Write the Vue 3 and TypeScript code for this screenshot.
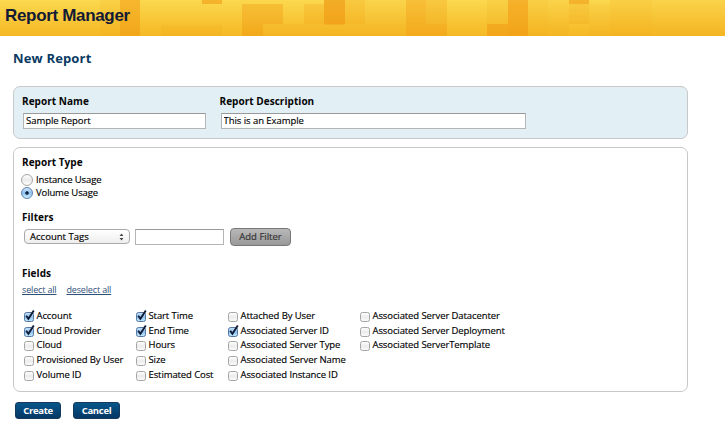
<script setup lang="ts">
import { ref } from 'vue'

interface Field { label: string; on: boolean }
interface Tile { x: number; y: number; w: number; h: number; o: number }

const name = ref('Sample Report')
const description = ref('This is an Example')
const filterText = ref('')
const reportType = ref('Volume Usage')
const types = ['Instance Usage', 'Volume Usage']

const f = (label: string, on = false): Field => ({ label, on })
const columns = ref<Field[][]>([
  [f('Account', true), f('Cloud Provider', true), f('Cloud'), f('Provisioned By User'), f('Volume ID')],
  [f('Start Time', true), f('End Time', true), f('Hours'), f('Size'), f('Estimated Cost')],
  [f('Attached By User'), f('Associated Server ID', true), f('Associated Server Type'), f('Associated Server Name'), f('Associated Instance ID')],
  [f('Associated Server Datacenter'), f('Associated Server Deployment'), f('Associated ServerTemplate')],
])

function setAll(on: boolean) {
  columns.value.forEach(col => col.forEach(item => { item.on = on }))
}

const t = (x: number, y: number, w: number, h: number, o: number): Tile => ({ x, y, w, h, o })
const tiles: Tile[] = [
  t(100, 0, 20, 36, 0.1), t(120, 0, 20, 36, 0.45), t(161, 25, 61, 11, 0.1),
  t(202, 0, 20, 4, 0.5), t(242, 4, 41, 20, 0.32), t(242, 24, 21, 12, 0.36),
  t(263, 24, 143, 12, 0.08), t(304, 4, 20, 20, 0.2), t(324, 0, 21, 24.5, 0.6),
  t(345, 0, 20, 24, 0.2), t(365, 0, 41, 24, 0.05), t(406, 0, 20, 24, 0.34),
  t(426, 0, 21, 24, 0.22), t(406, 24, 41, 12, 0.34), t(487, 0, 21, 24, 0.1),
  t(487, 24, 21, 12, 0.46), t(508, 0, 20, 36, 0.52), t(528, 0, 20, 36, 0.12), t(548, 0, 21, 36, 0.06),
  t(569, 0, 20, 4, 0.5), t(569, 4, 20, 20, 0.16), t(589, 4, 21, 32, 0.05),
  t(610, 0, 42, 36, 0.12), t(652, 0, 73, 36, 0.06),
]
</script>

<template>
  <div class="page">
    <header class="banner">
      <svg class="mosaic" viewBox="0 0 725 36" preserveAspectRatio="none" aria-hidden="true">
        <rect v-for="(r, i) in tiles" :key="i" :x="r.x" :y="r.y" :width="r.w" :height="r.h" fill="#ef900c" :fill-opacity="r.o" />
      </svg>
      <h1>Report Manager</h1>
    </header>

    <h2>New Report</h2>

    <section class="panel blue">
      <div class="group name">
        <h3>Report Name</h3>
        <input v-model="name" class="text" type="text" />
      </div>
      <div class="group desc">
        <h3>Report Description</h3>
        <input v-model="description" class="text" type="text" />
      </div>
    </section>

    <section class="panel main">
      <h3>Report Type</h3>
      <div class="radios">
        <label v-for="type in types" :key="type">
          <input v-model="reportType" type="radio" name="type" :value="type" />
          <span>{{ type }}</span>
        </label>
      </div>

      <h3 class="filters-title">Filters</h3>
      <div class="filters">
        <button class="select" type="button">
          <span>Account Tags</span>
          <svg width="5" height="8" viewBox="0 0 5 8"><path d="M0.6 3L2.5 0.6L4.4 3ZM0.6 5L2.5 7.4L4.4 5Z" fill="#444" /></svg>
        </button>
        <input v-model="filterText" class="text" type="text" />
        <button class="add" type="button">Add Filter</button>
      </div>

      <h3 class="fields-title">Fields</h3>
      <div class="links">
        <a href="#" @click.prevent="setAll(true)">select all</a>
        <a href="#" @click.prevent="setAll(false)">deselect all</a>
      </div>

      <div class="fields">
        <div v-for="(col, c) in columns" :key="c" class="col">
          <label v-for="item in col" :key="item.label">
            <input v-model="item.on" type="checkbox" />
            <svg class="box" width="12" height="13" viewBox="0 0 12 13">
              <defs>
                <linearGradient :id="'off' + c" x2="0" y2="1"><stop stop-color="#fff" /><stop offset=".5" stop-color="#ececec" /><stop offset="1" stop-color="#fbfbfb" /></linearGradient>
                <linearGradient :id="'on' + c" x2="0" y2="1"><stop stop-color="#c9e2f8" /><stop offset=".5" stop-color="#8fc2ef" /><stop offset="1" stop-color="#c4ecff" /></linearGradient>
              </defs>
              <rect x="1.5" y="3.5" width="9" height="9" rx="2" :fill="`url(#${item.on ? 'on' : 'off'}${c})`" :stroke="item.on ? '#57779f' : '#a5a5a5'" />
              <path v-if="item.on" d="M3.2 6.8L5.4 9.8L10.8 1.6" fill="none" stroke="#101b35" stroke-width="1.9" />
            </svg>
            <span>{{ item.label }}</span>
          </label>
        </div>
      </div>
    </section>

    <div class="actions">
      <button type="button">Create</button>
      <button type="button">Cancel</button>
    </div>
  </div>
</template>

<style>
body { background: #fff; }
</style>

<style scoped>
* { box-sizing: border-box; }
.page { width: 725px; height: 431px; overflow: hidden; background: #fff; color: #000; font: 9.5px/15px "Open Sans", "Noto Sans", sans-serif; letter-spacing: -.1px; -webkit-text-stroke: .15px currentColor; }
h1, h2, h3 { margin: 0; -webkit-text-stroke: 0; }
input, button { margin: 0; font: inherit; color: inherit; letter-spacing: inherit; }
.banner { position: relative; height: 36px; background: linear-gradient(#fbd84e, #f5b824); }
.mosaic { position: absolute; inset: 0; width: 725px; height: 36px; }
h1 { position: relative; padding: 6px 0 0 5px; font: bold 17px/20px "Liberation Sans", Arial, sans-serif; color: #121a35; letter-spacing: -.33px; }
h2 { height: 50px; padding: 12px 0 0 13px; font-size: 13px; line-height: 20px; font-weight: 700; color: #0a3a63; letter-spacing: .16px; }
h3 { font-size: 10px; line-height: 14px; font-weight: 700; color: #050505; letter-spacing: .04px; }
.panel { width: 675px; margin-left: 13px; border: 1px solid #c8c8c8; border-radius: 7px; }
.blue { display: flex; height: 53px; padding: 7px 8px 0; background: #e2eff5; }
.group.name { width: 197.5px; }
.group.desc { width: 306px; }
.text { display: block; height: 16px; padding: 0 2px 1px; border: 1px solid #b5b5b5; border-top-color: #999; border-radius: 0; background: #fff; outline: 0; letter-spacing: -.05px; }
.group .text { margin: 5px 0 0 1px; }
.name .text { width: 183px; }
.desc .text { width: 305px; }
.main { height: 245px; margin-top: 8px; padding: 7px 8px 0; }
.radios { display: flex; flex-direction: column; margin-top: 4px; }
.radios label { display: flex; align-items: center; height: 13px; gap: 3px; letter-spacing: -.12px; }
.radios input { appearance: none; flex: none; width: 12px; height: 12px; margin-left: -1px; border: 1px solid #a5a5a5; border-radius: 50%; background: linear-gradient(#fff, #eaeaea 50%, #fff); }
.radios input:checked { border-color: #6080aa; background: radial-gradient(circle, #10233f 0 1.3px, transparent 2.2px), linear-gradient(#cce5fc, #8fc2ef 50%, #c8efff); }
.filters-title { margin-top: 11px; }
.filters { display: flex; margin-top: 3px; align-items: center; height: 19px; padding-left: 2px; }
.select { display: flex; justify-content: space-between; align-items: center; width: 106px; height: 15px; padding: 0 5px 0 5px; border: 1px solid #aaa; border-radius: 4px; background: linear-gradient(#fff, #eee); letter-spacing: .02px; }
.filters .text { width: 89px; margin-left: 5px; }
.add { width: 61px; height: 18px; margin-left: 6px; padding: 0; border: 1px solid #777; border-radius: 4px; background: linear-gradient(#b8b8b8, #999); color: #333; line-height: 14px; letter-spacing: 0; }
.fields-title { margin-top: 20px; }
.links { display: flex; gap: 10px; margin-top: 3px; font: 9px/14px "Open Sans", "Noto Sans", sans-serif; letter-spacing: -.16px; -webkit-text-stroke: 0; }
.links a { color: #315078; }
.fields { display: grid; grid-template-columns: 112px 92px 132px 150px; margin-top: 11px; padding-left: 1px; }
.col label { display: flex; align-items: center; height: 14.7px; white-space: nowrap; }
.col input { position: absolute; opacity: 0; width: 1px; height: 1px; }
.box { flex: none; margin-right: 1.5px; }
.actions { display: flex; gap: 12px; padding: 10px 0 0 15px; }
.actions button { width: 46px; height: 17px; padding: 0; border: 1px solid #153a5d; border-radius: 3px; background: linear-gradient(#07558a, #053865); color: #fff; font: bold 9.5px/14px "Open Sans", sans-serif; letter-spacing: -.3px; -webkit-text-stroke: 0; }
.actions button + button { width: 47px; }
</style>
